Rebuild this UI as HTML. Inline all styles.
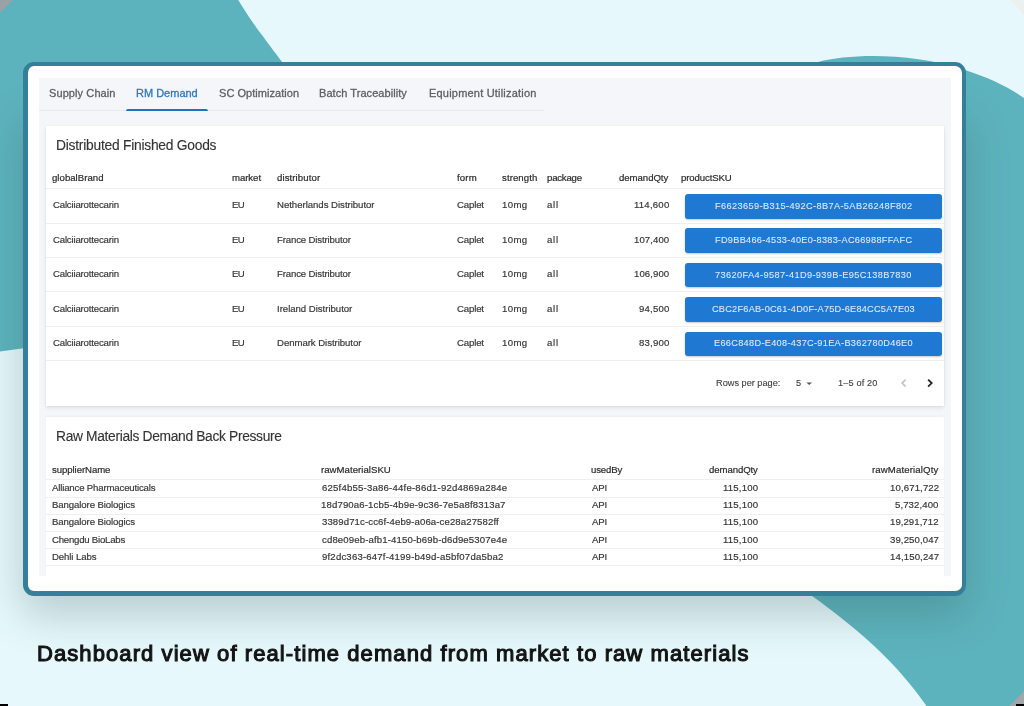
<!DOCTYPE html>
<html><head><meta charset="utf-8">
<style>
*{margin:0;padding:0;box-sizing:border-box}
html,body{width:1024px;height:706px;overflow:hidden}
body{position:relative;background:#e6f8fb;font-family:"Liberation Sans",sans-serif;color:#333}
.abs{position:absolute}
#bg{position:absolute;left:0;top:0;width:1024px;height:706px}
#shadow{position:absolute;left:28px;top:112px;width:933px;height:483px;border-radius:12px;box-shadow:0 14px 40px 8px rgba(45,80,80,.24)}
#frame{position:absolute;left:22.9px;top:62.3px;width:943.4px;height:533.6px;border:4.6px solid #357f99;border-width:4.6px 4.6px 5.1px 5px;border-radius:11px;background:#fff}
#panel{position:absolute;left:39.2px;top:77.8px;width:911.6px;height:498px;background:#f5f6f9}
#tabline{position:absolute;left:39.2px;top:110px;width:505px;height:1px;background:#e9eaee}
#underline{position:absolute;left:126.2px;top:108.8px;width:81.7px;height:2.6px;background:#1b73c8;border-radius:2px 2px 0 0}
.card{position:absolute;left:45.6px;width:898.8px;background:#fff;box-shadow:0 2px 4px rgba(0,0,0,.09),0 0 2px rgba(0,0,0,.05)}
.line{position:absolute;left:45.6px;width:898.8px;height:1px;background:#efeff2}
.btn{position:absolute;left:685px;width:256.5px;height:24.6px;background:#1f78d1;border-radius:3px;box-shadow:0 1px 2px rgba(0,0,0,.22)}

.x{position:absolute;white-space:nowrap;line-height:1;font-family:"Liberation Sans",sans-serif;will-change:transform}
.tab{color:#5c5f63;-webkit-text-stroke:0.3px #5c5f63}
.tab.act{color:#2a78c4;-webkit-text-stroke:0.3px #2a78c4}
.title{color:#333;-webkit-text-stroke:0.12px #333}
.th{color:#2a2a2a;-webkit-text-stroke:0.2px #2a2a2a}
.td{color:#363636;-webkit-text-stroke:0.18px #363636}
.bt{color:#dceaff;-webkit-text-stroke:0.08px #dceaff}
.pg{color:#3e3e3e;-webkit-text-stroke:0.12px #3e3e3e}
.cap{color:#141414;-webkit-text-stroke:1.1px #141414}

</style></head><body>
<svg id="bg" width="1024" height="706" viewBox="0 0 1024 706">
  <path d="M0 0 L238.2 0 C247 14 252 22 262 35 C270 46 276 54 290 72 L340 340 L40 346 L0 351.5 Z" fill="#5db3bd"/>
  <path d="M818 62 C850 54 910 52 965 70 C990 78 1010 88 1024 98 L1024 706 L926.5 706 C898.5 666 865 634 810 594.5 Z" fill="#5db3bd"/>
  <path d="M0 0 L13 0 C9 4 4 8 0 13 Z" fill="#9aa2a6"/>
  <path d="M1024 691 C1020 696 1014 701 1009.5 706 L1024 706 Z" fill="#a3a7a9"/>
  <path d="M1010 0 L1024 0 L1024 16 C1020 10 1016 5 1010 0 Z" fill="#eef0f0"/>
</svg>
<div id="shadow"></div>
<div id="frame"></div>
<div id="panel"></div>
<div id="tabline"></div>
<div id="underline"></div>
<div class="card" style="top:126px;height:279.5px"></div>
<div class="card" style="top:417px;height:158.6px;box-shadow:0 -1px 2px rgba(0,0,0,.04)"></div>
<div class="line" style="top:188.40px"></div>
<div class="line" style="top:222.75px"></div>
<div class="line" style="top:257.10px"></div>
<div class="line" style="top:291.45px"></div>
<div class="line" style="top:325.80px"></div>
<div class="line" style="top:360.15px"></div>
<div class="line" style="top:479.30px"></div>
<div class="line" style="top:496.50px"></div>
<div class="line" style="top:513.70px"></div>
<div class="line" style="top:530.90px"></div>
<div class="line" style="top:548.10px"></div>
<div class="line" style="top:565.30px"></div>
<div class="btn" style="top:194.10px"></div>
<div class="btn" style="top:228.45px"></div>
<div class="btn" style="top:262.80px"></div>
<div class="btn" style="top:297.15px"></div>
<div class="btn" style="top:331.50px"></div>
<svg class="abs" style="left:800px;top:378px" width="16" height="10" viewBox="0 0 16 10"><path d="M6.4 4.5 L12 4.5 L9.2 7 Z" fill="#555"/></svg>
<svg class="abs" style="left:897.3px;top:375.8px" width="14" height="14" viewBox="0 0 14 14"><path d="M8.7 3.6 L5.1 7.1 L8.7 10.6" fill="none" stroke="#c6c6c8" stroke-width="1.7"/></svg>
<svg class="abs" style="left:923.4px;top:375.8px" width="14" height="14" viewBox="0 0 14 14"><path d="M5.1 3.6 L8.7 7.1 L5.1 10.6" fill="none" stroke="#262626" stroke-width="1.8"/></svg>
<div class="x tab" style="left:49.10px;top:87.99px;font-size:11px;letter-spacing:0.095px">Supply Chain</div>
<div class="x tab act" style="left:135.65px;top:87.99px;font-size:11px;letter-spacing:0.000px">RM Demand</div>
<div class="x tab" style="left:218.50px;top:87.99px;font-size:11px;letter-spacing:0.043px">SC Optimization</div>
<div class="x tab" style="left:319.05px;top:87.99px;font-size:11px;letter-spacing:0.056px">Batch Traceability</div>
<div class="x tab" style="left:429.25px;top:87.99px;font-size:11px;letter-spacing:0.200px">Equipment Utilization</div>
<div class="x title" style="left:56.30px;top:138.62px;font-size:13.8px;letter-spacing:-0.236px">Distributed Finished Goods</div>
<div class="x title" style="left:56.20px;top:430.02px;font-size:13.8px;letter-spacing:-0.333px">Raw Materials Demand Back Pressure</div>
<div class="x th" style="left:52.15px;top:172.67px;font-size:9.6px;letter-spacing:0.030px">globalBrand</div>
<div class="x th" style="left:231.80px;top:172.67px;font-size:9.6px;letter-spacing:-0.050px">market</div>
<div class="x th" style="left:276.85px;top:172.67px;font-size:9.6px;letter-spacing:0.095px">distributor</div>
<div class="x th" style="left:457.00px;top:172.67px;font-size:9.6px;letter-spacing:0.183px">form</div>
<div class="x th" style="left:501.75px;top:172.67px;font-size:9.6px;letter-spacing:0.086px">strength</div>
<div class="x th" style="left:546.50px;top:172.67px;font-size:9.6px;letter-spacing:-0.200px">package</div>
<div class="x th" style="left:619.05px;top:172.67px;font-size:9.6px;letter-spacing:-0.037px">demandQty</div>
<div class="x th" style="left:681.40px;top:172.67px;font-size:9.6px;letter-spacing:-0.106px">productSKU</div>
<div class="x td" style="left:52.55px;top:200.47px;font-size:9.6px;letter-spacing:-0.175px">Calciiarottecarin</div>
<div class="x td" style="left:231.55px;top:200.47px;font-size:9.6px;letter-spacing:-0.600px">EU</div>
<div class="x td" style="left:276.85px;top:200.47px;font-size:9.6px;letter-spacing:-0.025px">Netherlands Distributor</div>
<div class="x td" style="left:456.75px;top:200.47px;font-size:9.6px;letter-spacing:-0.140px">Caplet</div>
<div class="x td" style="left:501.50px;top:200.47px;font-size:9.6px;letter-spacing:0.400px">10mg</div>
<div class="x td" style="left:546.75px;top:200.47px;font-size:9.6px;letter-spacing:0.725px">all</div>
<div class="x td" style="left:633.50px;top:200.47px;font-size:9.6px;letter-spacing:0.208px">114,600</div>
<div class="x td" style="left:52.55px;top:234.82px;font-size:9.6px;letter-spacing:-0.175px">Calciiarottecarin</div>
<div class="x td" style="left:231.55px;top:234.82px;font-size:9.6px;letter-spacing:-0.600px">EU</div>
<div class="x td" style="left:276.85px;top:234.82px;font-size:9.6px;letter-spacing:-0.141px">France Distributor</div>
<div class="x td" style="left:456.75px;top:234.82px;font-size:9.6px;letter-spacing:-0.140px">Caplet</div>
<div class="x td" style="left:501.50px;top:234.82px;font-size:9.6px;letter-spacing:0.400px">10mg</div>
<div class="x td" style="left:546.75px;top:234.82px;font-size:9.6px;letter-spacing:0.725px">all</div>
<div class="x td" style="left:633.50px;top:234.82px;font-size:9.6px;letter-spacing:0.083px">107,400</div>
<div class="x td" style="left:52.55px;top:269.17px;font-size:9.6px;letter-spacing:-0.175px">Calciiarottecarin</div>
<div class="x td" style="left:231.55px;top:269.17px;font-size:9.6px;letter-spacing:-0.600px">EU</div>
<div class="x td" style="left:276.85px;top:269.17px;font-size:9.6px;letter-spacing:-0.141px">France Distributor</div>
<div class="x td" style="left:456.75px;top:269.17px;font-size:9.6px;letter-spacing:-0.140px">Caplet</div>
<div class="x td" style="left:501.50px;top:269.17px;font-size:9.6px;letter-spacing:0.400px">10mg</div>
<div class="x td" style="left:546.75px;top:269.17px;font-size:9.6px;letter-spacing:0.725px">all</div>
<div class="x td" style="left:633.50px;top:269.17px;font-size:9.6px;letter-spacing:0.083px">106,900</div>
<div class="x td" style="left:52.55px;top:303.52px;font-size:9.6px;letter-spacing:-0.175px">Calciiarottecarin</div>
<div class="x td" style="left:231.55px;top:303.52px;font-size:9.6px;letter-spacing:-0.600px">EU</div>
<div class="x td" style="left:276.85px;top:303.52px;font-size:9.6px;letter-spacing:-0.022px">Ireland Distributor</div>
<div class="x td" style="left:456.75px;top:303.52px;font-size:9.6px;letter-spacing:-0.140px">Caplet</div>
<div class="x td" style="left:501.50px;top:303.52px;font-size:9.6px;letter-spacing:0.400px">10mg</div>
<div class="x td" style="left:546.75px;top:303.52px;font-size:9.6px;letter-spacing:0.725px">all</div>
<div class="x td" style="left:638.55px;top:303.52px;font-size:9.6px;letter-spacing:0.190px">94,500</div>
<div class="x td" style="left:52.55px;top:337.87px;font-size:9.6px;letter-spacing:-0.175px">Calciiarottecarin</div>
<div class="x td" style="left:231.55px;top:337.87px;font-size:9.6px;letter-spacing:-0.600px">EU</div>
<div class="x td" style="left:276.85px;top:337.87px;font-size:9.6px;letter-spacing:-0.050px">Denmark Distributor</div>
<div class="x td" style="left:456.75px;top:337.87px;font-size:9.6px;letter-spacing:-0.140px">Caplet</div>
<div class="x td" style="left:501.50px;top:337.87px;font-size:9.6px;letter-spacing:0.400px">10mg</div>
<div class="x td" style="left:546.75px;top:337.87px;font-size:9.6px;letter-spacing:0.725px">all</div>
<div class="x td" style="left:638.55px;top:337.87px;font-size:9.6px;letter-spacing:0.190px">83,900</div>
<div class="x bt" style="left:714.55px;top:201.91px;font-size:9.2px;letter-spacing:0.390px">F6623659-B315-492C-8B7A-5AB26248F802</div>
<div class="x bt" style="left:714.55px;top:236.26px;font-size:9.2px;letter-spacing:0.290px">FD9BB466-4533-40E0-8383-AC66988FFAFC</div>
<div class="x bt" style="left:715.10px;top:270.61px;font-size:9.2px;letter-spacing:0.389px">73620FA4-9587-41D9-939B-E95C138B7830</div>
<div class="x bt" style="left:711.70px;top:304.96px;font-size:9.2px;letter-spacing:0.233px">CBC2F6AB-0C61-4D0F-A75D-6E84CC5A7E03</div>
<div class="x bt" style="left:713.55px;top:339.31px;font-size:9.2px;letter-spacing:0.306px">E66C848D-E408-437C-91EA-B362780D46E0</div>
<div class="x pg" style="left:715.50px;top:378.51px;font-size:9.2px;letter-spacing:0.000px">Rows per page:</div>
<div class="x pg" style="left:795.95px;top:378.51px;font-size:9.2px;letter-spacing:0.000px">5</div>
<div class="x pg" style="left:838.30px;top:378.51px;font-size:9.2px;letter-spacing:0.138px">1–5 of 20</div>
<div class="x th" style="left:52.05px;top:464.57px;font-size:9.6px;letter-spacing:-0.068px">supplierName</div>
<div class="x th" style="left:321.40px;top:464.57px;font-size:9.6px;letter-spacing:0.035px">rawMaterialSKU</div>
<div class="x th" style="left:591.40px;top:464.57px;font-size:9.6px;letter-spacing:-0.160px">usedBy</div>
<div class="x th" style="left:709.05px;top:464.57px;font-size:9.6px;letter-spacing:-0.087px">demandQty</div>
<div class="x th" style="left:872.10px;top:464.57px;font-size:9.6px;letter-spacing:0.138px">rawMaterialQty</div>
<div class="x td" style="left:52.30px;top:483.07px;font-size:9.6px;letter-spacing:-0.157px">Alliance Pharmaceuticals</div>
<div class="x td" style="left:321.65px;top:483.07px;font-size:9.6px;letter-spacing:0.197px">625f4b55-3a86-44fe-86d1-92d4869a284e</div>
<div class="x td" style="left:592.00px;top:483.07px;font-size:9.6px;letter-spacing:-0.175px">API</div>
<div class="x td" style="left:723.30px;top:483.07px;font-size:9.6px;letter-spacing:0.175px">115,100</div>
<div class="x td" style="left:889.50px;top:483.07px;font-size:9.6px;letter-spacing:0.128px">10,671,722</div>
<div class="x td" style="left:51.55px;top:500.27px;font-size:9.6px;letter-spacing:-0.097px">Bangalore Biologics</div>
<div class="x td" style="left:321.40px;top:500.27px;font-size:9.6px;letter-spacing:0.134px">18d790a6-1cb5-4b9e-9c36-7e5a8f8313a7</div>
<div class="x td" style="left:592.00px;top:500.27px;font-size:9.6px;letter-spacing:-0.175px">API</div>
<div class="x td" style="left:723.30px;top:500.27px;font-size:9.6px;letter-spacing:0.175px">115,100</div>
<div class="x td" style="left:895.15px;top:500.27px;font-size:9.6px;letter-spacing:0.094px">5,732,400</div>
<div class="x td" style="left:51.55px;top:517.47px;font-size:9.6px;letter-spacing:-0.097px">Bangalore Biologics</div>
<div class="x td" style="left:321.65px;top:517.47px;font-size:9.6px;letter-spacing:0.100px">3389d71c-cc6f-4eb9-a06a-ce28a27582ff</div>
<div class="x td" style="left:592.00px;top:517.47px;font-size:9.6px;letter-spacing:-0.175px">API</div>
<div class="x td" style="left:723.30px;top:517.47px;font-size:9.6px;letter-spacing:0.175px">115,100</div>
<div class="x td" style="left:890.20px;top:517.47px;font-size:9.6px;letter-spacing:0.050px">19,291,712</div>
<div class="x td" style="left:52.05px;top:534.67px;font-size:9.6px;letter-spacing:-0.218px">Chengdu BioLabs</div>
<div class="x td" style="left:321.65px;top:534.67px;font-size:9.6px;letter-spacing:0.133px">cd8e09eb-afb1-4150-b69b-d6d9e5307e4e</div>
<div class="x td" style="left:592.00px;top:534.67px;font-size:9.6px;letter-spacing:-0.175px">API</div>
<div class="x td" style="left:723.30px;top:534.67px;font-size:9.6px;letter-spacing:0.175px">115,100</div>
<div class="x td" style="left:889.75px;top:534.67px;font-size:9.6px;letter-spacing:0.100px">39,250,047</div>
<div class="x td" style="left:51.55px;top:551.87px;font-size:9.6px;letter-spacing:-0.094px">Dehli Labs</div>
<div class="x td" style="left:321.65px;top:551.87px;font-size:9.6px;letter-spacing:0.181px">9f2dc363-647f-4199-b49d-a5bf07da5ba2</div>
<div class="x td" style="left:592.00px;top:551.87px;font-size:9.6px;letter-spacing:-0.175px">API</div>
<div class="x td" style="left:723.30px;top:551.87px;font-size:9.6px;letter-spacing:0.175px">115,100</div>
<div class="x td" style="left:889.50px;top:551.87px;font-size:9.6px;letter-spacing:0.128px">14,150,247</div>
<div class="x cap" style="left:36.65px;top:642.88px;font-size:22px;letter-spacing:1.082px">Dashboard view of real-time demand from market to raw materials</div>
<div class="abs" style="left:0;top:704px;width:8px;height:2px;background:#000"></div>
<div class="abs" style="left:1016px;top:704px;width:8px;height:2px;background:#000"></div>
</body></html>
